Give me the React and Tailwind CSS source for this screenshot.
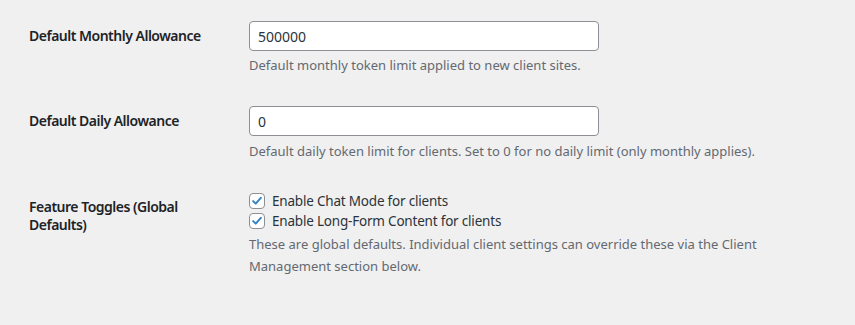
import React from "react";

function Check() {
  return (
    <span className="flex h-[16px] w-[16px] shrink-0 items-center justify-center rounded-[4px] border border-[#8c8f94] bg-white">
      <svg width="14" height="14" viewBox="0 0 20 20">
        <path d="M4.5 10.2 L8.2 13.8 L15.5 5.5" fill="none" stroke="#3582c4" strokeWidth="2.8" strokeLinecap="round" strokeLinejoin="round" />
      </svg>
    </span>
  );
}

function Row({ label, children }) {
  return (
    <div className="flex">
      <div className="w-[210px] shrink-0 pr-[10px] pt-[21px] pb-[20px] text-[14px] font-semibold leading-[18px] tracking-[-0.5px] text-[#1d2327]">
        {label}
      </div>
      <div className="flex-1 px-[10px] py-[15px]">{children}</div>
    </div>
  );
}

export default function App() {
  return (
    <div
      className="min-h-screen bg-[#f0f0f1] pl-[29px] pt-[6px] pr-[10px]"
      style={{ fontFamily: '"Noto Sans", "Open Sans", sans-serif' }}
    >
      <Row label="Default Monthly Allowance">
        <div className="flex h-[30px] w-[350px] items-center rounded-[4px] border border-[#8c8f94] bg-white px-[8px] text-[14px] text-[#2c3338]">
          500000
        </div>
        <p className="mt-[3px] text-[13px] leading-[22px] text-[#646970]">
          Default monthly token limit applied to new client sites.
        </p>
      </Row>
      <Row label="Default Daily Allowance">
        <div className="flex h-[30px] w-[350px] items-center rounded-[4px] border border-[#8c8f94] bg-white px-[8px] text-[14px] text-[#2c3338]">
          0
        </div>
        <p className="mt-[4px] text-[13px] leading-[22px] text-[#646970]">
          Default daily token limit for clients. Set to 0 for no daily limit (only monthly applies).
        </p>
      </Row>
      <Row label={<>Feature Toggles (Global<br />Defaults)</>}>
        <div className="-mt-[1px] flex flex-col">
          <label className="flex h-[20px] items-center gap-[7px] text-[13.5px] tracking-[-0.2px] text-[#2c3338]">
            <Check />
            Enable Chat Mode for clients
          </label>
          <label className="flex h-[20px] items-center gap-[7px] text-[13.5px] tracking-[-0.2px] text-[#2c3338]">
            <Check />
            Enable Long-Form Content for clients
          </label>
        </div>
        <p className="mt-[2px] max-w-[560px] text-[13px] leading-[22px] text-[#646970]">
          These are global defaults. Individual client settings can override these via the Client Management section below.
        </p>
      </Row>
    </div>
  );
}
